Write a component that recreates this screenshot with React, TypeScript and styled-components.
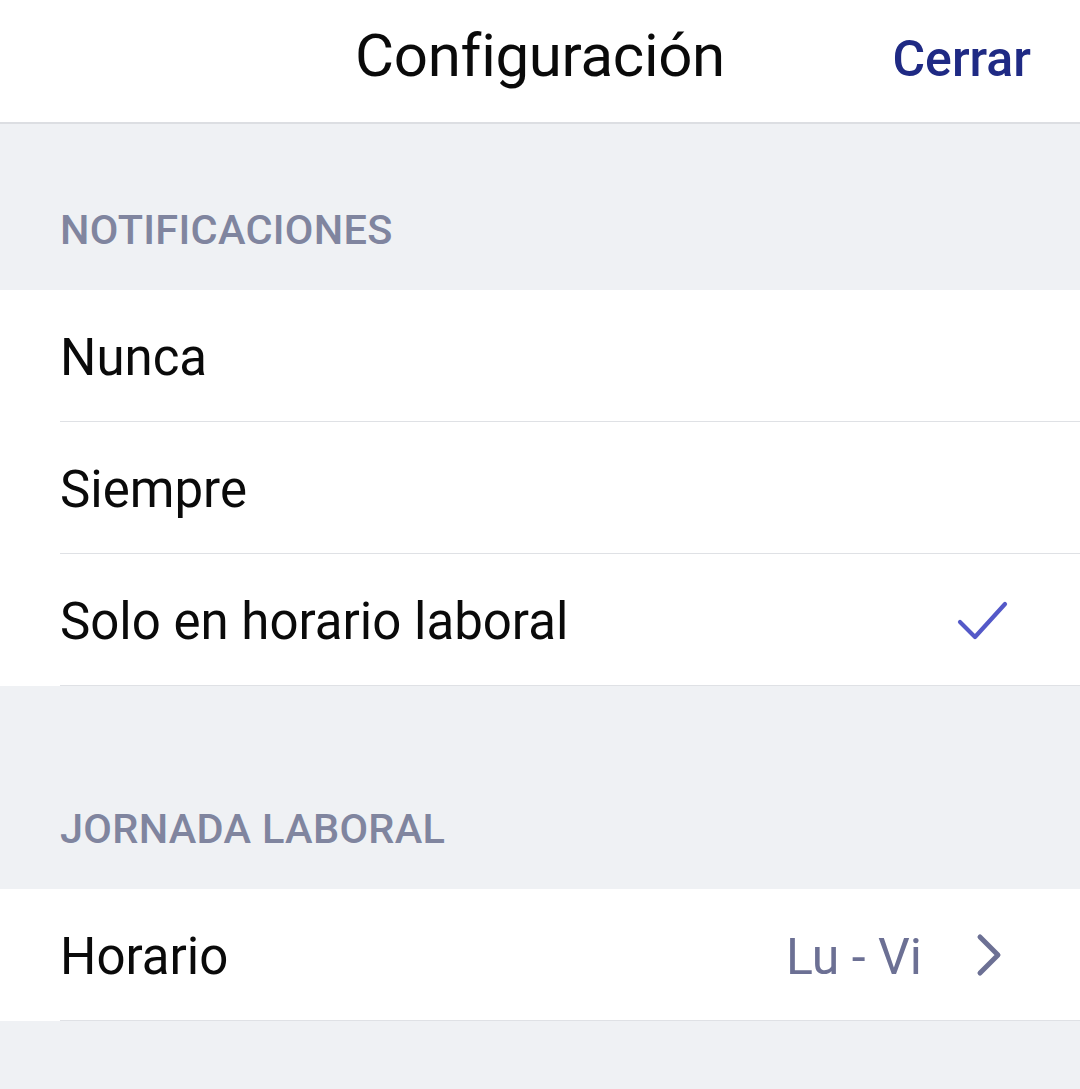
import React from "react";
import styled, { createGlobalStyle } from "styled-components";

const GlobalStyle = createGlobalStyle`
  html, body {
    margin: 0;
    padding: 0;
    background: #eff1f4;
    font-family: Roboto, "Noto Sans", "Liberation Sans", sans-serif;
    -webkit-font-smoothing: antialiased;
  }
  * { box-sizing: border-box; }
`;

const Page = styled.div`
  width: 1080px;
  min-height: 1089px;
  background: #eff1f4;
`;

const Header = styled.header`
  height: 124px;
  padding: 26px 49px 0 49px;
  background: #ffffff;
  border-bottom: 2px solid #dcdee2;
  display: grid;
  grid-template-columns: 1fr auto 1fr;
  align-items: baseline;
`;

const Title = styled.h1`
  grid-column: 2;
  margin: 0;
  font-size: 60px;
  line-height: 1;
  font-weight: 400;
  color: #0a0a0a;
  letter-spacing: -0.3px;
`;

const CloseButton = styled.button`
  grid-column: 3;
  justify-self: end;
  border: 0;
  background: none;
  padding: 0;
  font-family: inherit;
  font-size: 50px;
  line-height: 1;
  font-weight: 500;
  color: #1f2a84;
  cursor: pointer;
`;

const SectionHeader = styled.div<{ $height: number }>`
  height: ${(p) => p.$height}px;
  display: flex;
  align-items: flex-end;
  padding: 0 0 40px 60px;
  font-size: 41.5px;
  line-height: 1;
  font-weight: 500;
  color: #80859f;
  letter-spacing: 0.3px;
`;

const Group = styled.div`
  background: #ffffff;
`;

const Row = styled.div`
  padding-left: 60px;
  background: #ffffff;
`;

const RowInner = styled.div<{ $trailing?: number }>`
  height: 132px;
  border-bottom: 1px solid #dfe1e5;
  display: flex;
  align-items: center;
  padding-right: ${(p) => p.$trailing ?? 72}px;
`;

const Label = styled.span`
  flex: 1;
  padding-top: 4px;
  font-size: 51px;
  line-height: 1;
  color: #0a0a0a;
`;

const Value = styled.span`
  padding-top: 4px;
  font-size: 50px;
  line-height: 1;
  color: #6c7094;
  margin-right: 52px;
`;

const Check = () => (
  <svg width="52" height="44" viewBox="0 0 52 44" fill="none">
    <path
      d="M4 24 L19 39 L49 6"
      stroke="#5459c8"
      strokeWidth="4.2"
      strokeLinecap="round"
      strokeLinejoin="round"
    />
  </svg>
);

const Chevron = () => (
  <svg width="30" height="44" viewBox="0 0 30 44" fill="none">
    <path
      d="M6 4 L24 22 L6 40"
      stroke="#6c7094"
      strokeWidth="5"
      strokeLinecap="round"
      strokeLinejoin="round"
    />
  </svg>
);

const options = [
  { label: "Nunca", checked: false },
  { label: "Siempre", checked: false },
  { label: "Solo en horario laboral", checked: true },
];

export default function App() {
  return (
    <>
      <GlobalStyle />
      <Page>
        <Header>
          <Title>Configuración</Title>
          <CloseButton>Cerrar</CloseButton>
        </Header>
        <SectionHeader $height={166}>NOTIFICACIONES</SectionHeader>
        <Group>
          {options.map((o) => (
            <Row key={o.label}>
              <RowInner>
                <Label>{o.label}</Label>
                {o.checked && <Check />}
              </RowInner>
            </Row>
          ))}
        </Group>
        <SectionHeader $height={203}>JORNADA LABORAL</SectionHeader>
        <Group>
          <Row>
            <RowInner $trailing={76}>
              <Label>Horario</Label>
              <Value>Lu - Vi</Value>
              <Chevron />
            </RowInner>
          </Row>
        </Group>
      </Page>
    </>
  );
}
